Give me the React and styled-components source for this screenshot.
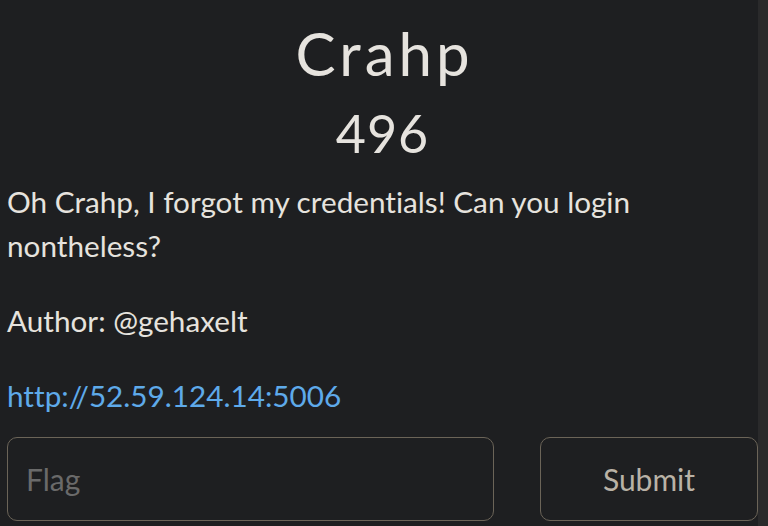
import React from 'react';
import styled, { createGlobalStyle } from 'styled-components';

const GlobalStyle = createGlobalStyle`
  html, body {
    margin: 0;
    padding: 0;
    background-color: #1e1f21;
  }
  body {
    font-family: Lato, "Open Sans", sans-serif;
    font-variant-ligatures: none;
    overflow: hidden;
  }
`;

const Page = styled.div`
  display: flex;
  width: 768px;
  height: 526px;
  background-color: #1e1f21;
`;

const Modal = styled.div`
  flex: 1;
  overflow: hidden;
  padding: 0 0 0 7px;
  color: #e6e3de;
`;

const Scrollbar = styled.div`
  width: 10px;
  background-color: #2a2a2b;
`;

const Title = styled.h1`
  margin: 0;
  padding-top: 15px;
  text-align: center;
  font-size: 60px;
  font-weight: 400;
  letter-spacing: 4px;
  text-indent: 4px;
  line-height: 76px;
`;

const Points = styled.h2`
  margin: 11px 0 16px;
  text-align: center;
  font-size: 52px;
  font-weight: 400;
  letter-spacing: 1px;
  line-height: 62px;
`;

const Text = styled.p`
  margin: 0 0 31px;
  font-size: 29.7px;
  line-height: 44px;
`;

const Link = styled.a`
  color: #5eaaea;
  text-decoration: none;
`;

const FormRow = styled.div`
  display: grid;
  grid-template-columns: 487px 218px;
  column-gap: 46px;
  margin-top: -12px;
`;

const Field = styled.input`
  box-sizing: border-box;
  height: 84px;
  padding: 0 18px;
  background: transparent;
  border: 1.5px solid #6b6458;
  border-radius: 10px;
  color: #e6e3de;
  font-family: Lato, sans-serif;
  font-size: 30px;
  outline: none;
  &::placeholder {
    color: #6a6a6a;
  }
`;

const SubmitButton = styled.button`
  box-sizing: border-box;
  height: 84px;
  background: transparent;
  border: 1.5px solid #6b6458;
  border-radius: 10px;
  color: #b9b2a6;
  font-family: Lato, sans-serif;
  font-size: 30px;
  cursor: pointer;
`;

const App = () => (
  <>
    <GlobalStyle />
    <Page>
      <Modal>
        <Title>Crahp</Title>
        <Points>496</Points>
        <Text>Oh Crahp, I forgot my credentials! Can you login nontheless?</Text>
        <Text>Author: @gehaxelt</Text>
        <Text>
          <Link href="#">http://52.59.124.14:5006</Link>
        </Text>
        <FormRow>
          <Field placeholder="Flag" />
          <SubmitButton>Submit</SubmitButton>
        </FormRow>
      </Modal>
      <Scrollbar />
    </Page>
  </>
);

export default App;
